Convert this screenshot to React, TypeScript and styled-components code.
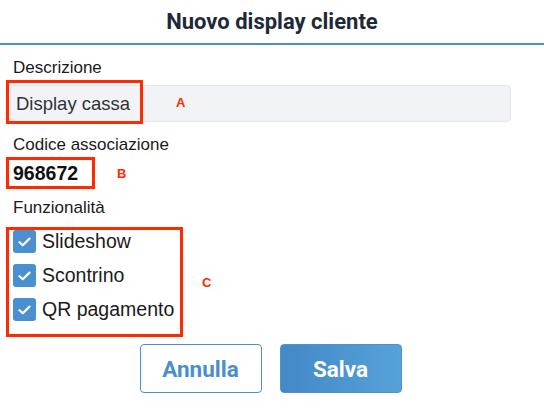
import styled, { createGlobalStyle } from "styled-components";

const GlobalStyle = createGlobalStyle`
    body {
        margin: 0;
        background: #ffffff;
        font-family: "Liberation Sans", Arial, sans-serif;
    }
`;

const Dialog = styled.section`
    width: 544px;
    height: 408px;
    background: #ffffff;
    overflow: hidden;
`;

const Header = styled.header`
    height: 43px;
    display: flex;
    align-items: center;
    justify-content: center;
    border-bottom: 2px solid #4a8fc9;
`;

const Title = styled.h1`
    margin: 0;
    font-family: Roboto, sans-serif;
    font-weight: 700;
    font-size: 22px;
    color: #1d2a36;
`;

const Body = styled.div`
    padding: 0 33px 0 10px;
    display: flex;
    flex-direction: column;
`;

const Label = styled.div<{ $top: number }>`
    margin-top: ${({ $top }) => $top}px;
    padding-left: 3px;
    font-size: 17px;
    line-height: 20px;
    color: #1a1a1a;
`;

const InputWrap = styled.div`
    position: relative;
    margin-top: 7px;
`;

const TextInput = styled.div`
    height: 37px;
    box-sizing: border-box;
    display: flex;
    align-items: center;
    padding-left: 5px;
    background: #f2f3f7;
    border: 1px solid #e4e6eb;
    border-radius: 4px;
    font-size: 18.5px;
    color: #2e3338;
`;

const Highlight = styled.div`
    position: absolute;
    left: -4px;
    top: -5px;
    width: 137px;
    height: 44px;
    box-sizing: border-box;
    border: 3px solid #ff2a00;
    pointer-events: none;
`;

const Tag = styled.span`
    font-family: "Liberation Sans", Arial, sans-serif;
    font-weight: 700;
    font-size: 13px;
    color: #ff2a00;
`;

const FloatingTag = styled(Tag)`
    position: absolute;
    left: 166px;
    top: 10px;
`;

const AnnotatedRow = styled.div<{ $top: number; $gap: number }>`
    display: flex;
    align-items: center;
    gap: ${({ $gap }) => $gap}px;
    margin-top: ${({ $top }) => $top}px;
    margin-left: -4px;
`;

const RedBox = styled.div<{ $w: number; $h: number }>`
    width: ${({ $w }) => $w}px;
    height: ${({ $h }) => $h}px;
    box-sizing: border-box;
    border: 3px solid #ff2a00;
`;

const CodeBox = styled(RedBox)`
    display: flex;
    align-items: center;
    padding-left: 4px;
    font-weight: 700;
    font-size: 19.5px;
    color: #111111;
`;

const CheckList = styled(RedBox)`
    display: flex;
    flex-direction: column;
    gap: 11px;
    padding: 0 0 0 4px;
`;

const CheckRow = styled.label`
    display: flex;
    align-items: center;
    gap: 6px;
    height: 23px;
    font-size: 19.5px;
    color: #1a1a1a;
`;

const CheckBox = styled.span`
    width: 23px;
    height: 23px;
    border-radius: 3px;
    background: #4a8fcf;
    display: flex;
    align-items: center;
    justify-content: center;
`;

const Actions = styled.div`
    margin-top: 7px;
    display: flex;
    justify-content: center;
    gap: 18px;
    padding-left: 20px;
`;

const Button = styled.button<{ $primary?: boolean }>`
    width: 122px;
    height: 49px;
    border-radius: 4px;
    font-family: Roboto, sans-serif;
    font-weight: 700;
    font-size: 22.5px;
    cursor: pointer;
    border: 1px solid ${({ $primary }) => ($primary ? "#4a93d0" : "#4a8fcf")};
    color: ${({ $primary }) => ($primary ? "#ffffff" : "#4a8fcc")};
    background: ${({ $primary }) =>
        $primary ? "linear-gradient(90deg, #4388c7, #55a2d8)" : "#ffffff"};
`;

const Check = () => (
    <svg width="13" height="10" viewBox="0 0 13 10">
        <path d="M1.5 5.2 L4.8 8.3 L11.5 1.6" fill="none" stroke="#ffffff" strokeWidth="2.2" strokeLinecap="round" strokeLinejoin="round" />
    </svg>
);

const features = ["Slideshow", "Scontrino", "QR pagamento"];

const App = () => {
    return (
        <Dialog>
            <GlobalStyle />
            <Header>
                <Title>Nuovo display cliente</Title>
            </Header>
            <Body>
                <Label $top={13}>Descrizione</Label>
                <InputWrap>
                    <TextInput>Display cassa</TextInput>
                    <Highlight />
                    <FloatingTag>A</FloatingTag>
                </InputWrap>
                <Label $top={13}>Codice associazione</Label>
                <AnnotatedRow $top={2} $gap={22}>
                    <CodeBox $w={89} $h={32}>968672</CodeBox>
                    <Tag>B</Tag>
                </AnnotatedRow>
                <Label $top={9}>Funzionalità</Label>
                <AnnotatedRow $top={9} $gap={19}>
                    <CheckList $w={177} $h={110}>
                        {features.map((f) => (
                            <CheckRow key={f}>
                                <CheckBox>
                                    <Check />
                                </CheckBox>
                                {f}
                            </CheckRow>
                        ))}
                    </CheckList>
                    <Tag>C</Tag>
                </AnnotatedRow>
                <Actions>
                    <Button>Annulla</Button>
                    <Button $primary>Salva</Button>
                </Actions>
            </Body>
        </Dialog>
    );
};

export default App;
